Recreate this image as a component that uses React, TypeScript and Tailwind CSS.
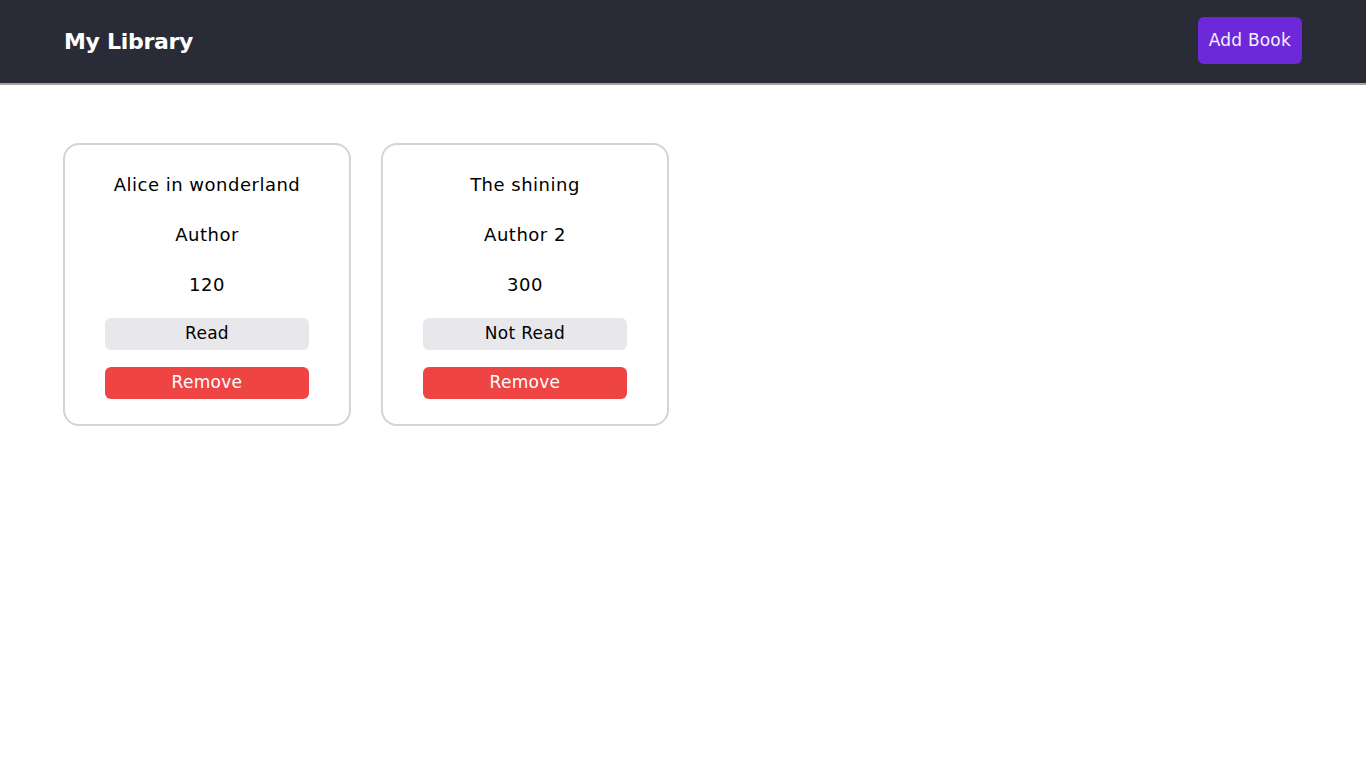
import React from "react";

const books = [
  { title: "Alice in wonderland", author: "Author", pages: 120, read: true },
  { title: "The shining", author: "Author 2", pages: 300, read: false },
];

export default function App() {
  return (
    <div
      className="min-h-screen bg-white text-black"
      style={{ fontFamily: '"DejaVu Sans", "Noto Sans", sans-serif' }}
    >
      <header className="flex h-[85px] items-center justify-between border-b-2 border-[#a3a3a8] bg-[#292b36] px-16">
        <h1 className="text-[22px] font-bold tracking-[-0.3px] text-white">My Library</h1>
        <button className="mt-[-2px] h-[47px] rounded-md bg-[#6d28d9] px-[11px] text-[17px] tracking-[0.2px] text-[#f3f0ff]">
          Add Book
        </button>
      </header>

      <main className="flex gap-[30px] px-[63px] pt-[58px]">
        {books.map((b) => (
          <div
            key={b.title}
            className="flex w-[288px] flex-col rounded-2xl border-2 border-[#d4d4d4] px-10 pb-[25px] pt-[26px] text-center text-[18px] tracking-[0.5px]"
          >
            <p className="leading-7">{b.title}</p>
            <p className="mt-[22px] leading-7">{b.author}</p>
            <p className="mt-[22px] leading-7">{b.pages}</p>
            <button className="mt-[19px] h-8 rounded-md bg-[#e7e7ec] text-[17px] tracking-[0.3px]">
              {b.read ? "Read" : "Not Read"}
            </button>
            <button className="mt-[17px] h-8 rounded-md bg-[#ef4444] text-[17px] tracking-[0.3px] text-white">
              Remove
            </button>
          </div>
        ))}
      </main>
    </div>
  );
}
